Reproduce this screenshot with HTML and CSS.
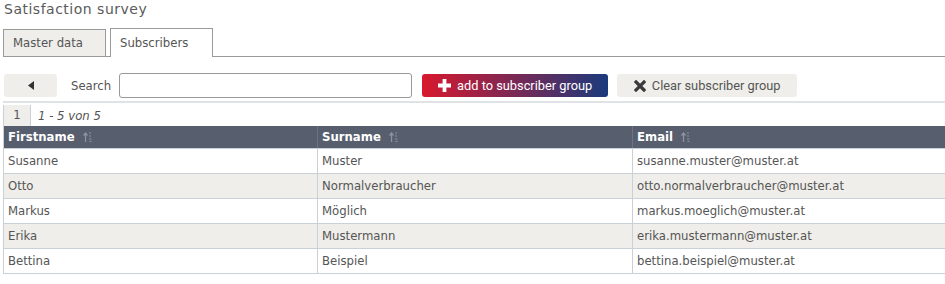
FILE: index.html
```html
<!DOCTYPE html>
<html lang="en">
<head>
    <meta charset="UTF-8">
    <meta name="viewport" content="width=device-width, initial-scale=1.0">
    <title>Satisfaction survey</title>
    <link rel="stylesheet" href="styles.css">
</head>
<body>

    <h1 class="page-title">Satisfaction survey</h1>

    <!-- Tabs -->
    <div class="tabs">
        <div class="tab">Master data</div>
        <div class="tab active">Subscribers</div>
    </div>

    <!-- Toolbar -->
    <div class="toolbar">
        <button class="btn btn-back">
            <svg width="6" height="9" viewBox="0 0 6 9"><path d="M6 0 L0 4.5 L6 9 Z" fill="#333"/></svg>
        </button>
        <label class="search-label" for="search">Search</label>
        <input type="text" id="search" class="search-input">
        <button class="btn btn-add">
            <svg width="13" height="13" viewBox="0 0 13 13"><path d="M4.6 0 H8.4 V4.6 H13 V8.4 H8.4 V13 H4.6 V8.4 H0 V4.6 H4.6 Z" fill="#fff"/></svg>
            add to subscriber group
        </button>
        <button class="btn btn-clear">
            <svg width="12" height="12" viewBox="0 0 12 12"><path d="M2 2 L10 10 M10 2 L2 10" stroke="#3a3a3a" stroke-width="3.2" stroke-linecap="square"/></svg>
            Clear subscriber group
        </button>
    </div>

    <!-- Subscriber list -->
    <div class="grid">
        <div class="pager">
            <span class="page-num">1</span>
            <span class="page-info">1 - 5 von 5</span>
        </div>
        <table class="subscribers">
            <colgroup>
                <col style="width: 314px">
                <col style="width: 315px">
                <col style="width: 316px">
            </colgroup>
            <thead>
                <tr>
                    <th>Firstname <span class="sort"><svg width="9" height="10" viewBox="0 0 9 10"><path d="M2.5 10 V1.5 M0.5 3.5 L2.5 1 L4.5 3.5" stroke="#8c94a3" stroke-width="1.3" fill="none"/><path d="M6 1 H8 M6 4 H8 M6 7 H8.5 M6.5 9.5 H8.5" stroke="#8c94a3" stroke-width="1.2"/></svg></span></th>
                    <th>Surname <span class="sort"><svg width="9" height="10" viewBox="0 0 9 10"><path d="M2.5 10 V1.5 M0.5 3.5 L2.5 1 L4.5 3.5" stroke="#8c94a3" stroke-width="1.3" fill="none"/><path d="M6 1 H8 M6 4 H8 M6 7 H8.5 M6.5 9.5 H8.5" stroke="#8c94a3" stroke-width="1.2"/></svg></span></th>
                    <th>Email <span class="sort"><svg width="9" height="10" viewBox="0 0 9 10"><path d="M2.5 10 V1.5 M0.5 3.5 L2.5 1 L4.5 3.5" stroke="#8c94a3" stroke-width="1.3" fill="none"/><path d="M6 1 H8 M6 4 H8 M6 7 H8.5 M6.5 9.5 H8.5" stroke="#8c94a3" stroke-width="1.2"/></svg></span></th>
                </tr>
            </thead>
            <tbody>
                <tr><td>Susanne</td><td>Muster</td><td>susanne.muster@muster.at</td></tr>
                <tr><td>Otto</td><td>Normalverbraucher</td><td>otto.normalverbraucher@muster.at</td></tr>
                <tr><td>Markus</td><td>Möglich</td><td>markus.moeglich@muster.at</td></tr>
                <tr><td>Erika</td><td>Mustermann</td><td>erika.mustermann@muster.at</td></tr>
                <tr><td>Bettina</td><td>Beispiel</td><td>bettina.beispiel@muster.at</td></tr>
            </tbody>
        </table>
    </div>

</body>
</html>
```

FILE: styles.css
```css
body {
    font-family: "DejaVu Sans", Verdana, sans-serif;
    font-size: 11.7px;
    color: #555;
    background-color: #fff;
    margin: 0;
    padding: 0 0 0 3px;
    overflow: hidden;
}

.page-title {
    font-size: 14px;
    font-weight: normal;
    letter-spacing: 0.5px;
    color: #5a5a5a;
    margin: 0;
    padding-left: 1px;
    line-height: 18px;
}

/* Tabs */
.tabs {
    display: flex;
    align-items: flex-end;
    gap: 4px;
    margin-top: 10px;
    border-bottom: 1px solid #9a9a9a;
}

.tab {
    height: 26px;
    line-height: 26px;
    padding: 0 9px;
    border: 1px solid #9a9a9a;
    border-bottom: none;
    background-color: #efeeea;
    min-width: 83px;
}

.tab.active {
    height: 28px;
    line-height: 29px;
    background-color: #fff;
    margin-bottom: -1px;
}

/* Toolbar */
.toolbar {
    display: flex;
    align-items: center;
    height: 25px;
    margin-top: 16px;
    padding-bottom: 3px;
    border-bottom: 2px solid #dfe3e6;
}

.btn {
    display: flex;
    align-items: center;
    justify-content: center;
    gap: 6px;
    height: 23px;
    border: none;
    border-radius: 3px;
    font-family: Roboto, "Liberation Sans", sans-serif;
    font-size: 12.8px;
    cursor: pointer;
}

.btn-back {
    width: 53px;
    margin-left: 1px;
    background-color: #efeeea;
}

.search-label {
    margin-left: 14px;
}

.search-input {
    width: 293px;
    height: 25px;
    box-sizing: border-box;
    margin-left: 8px;
    border: 1px solid #999;
    border-radius: 3px;
}

.btn-add {
    width: 186px;
    margin-left: 10px;
    color: #fff;
    background: linear-gradient(to right, #d8182e, #1a3a7c);
}

.btn-clear {
    width: 180px;
    margin-left: 9px;
    color: #555;
    background-color: #efeeea;
}

/* Grid */
.grid {
    margin-top: 2px;
}

.pager {
    display: flex;
    align-items: center;
    height: 21px;
    border-left: 1px solid #c9d1d6;
}

.page-num {
    width: 26px;
    height: 21px;
    line-height: 21px;
    text-align: center;
    background-color: #efeeea;
    border-right: 1px solid #c9d1d6;
}

.page-info {
    font-style: italic;
    margin-left: 7px;
}

.subscribers {
    border-collapse: collapse;
    table-layout: fixed;
    width: 945px;
}

.subscribers th {
    background-color: #575e6e;
    color: #fff;
    font-weight: bold;
    text-align: left;
    height: 22px;
    padding: 0 4px;
    border-left: 1px solid #6c7383;
    border-bottom: 1px solid #c9d1d6;
}

.subscribers th:first-child {
    border-left: 1px solid #c9d1d6;
}

.sort {
    margin-left: 4px;
    vertical-align: -1px;
}

.subscribers td {
    height: 24px;
    padding: 0 4px;
    border: 1px solid #c9d1d6;
    border-top: none;
}

.subscribers tbody tr:nth-child(even) td {
    background-color: #efeeea;
}
```
